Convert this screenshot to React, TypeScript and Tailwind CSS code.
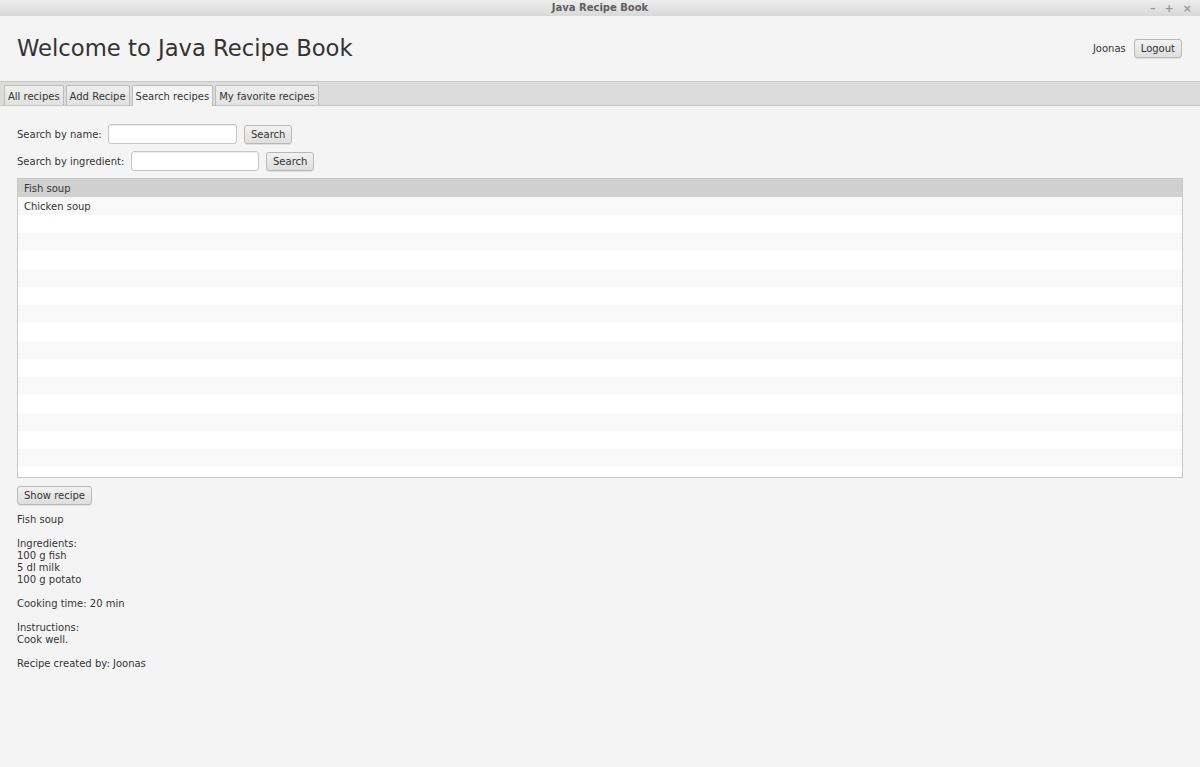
import React from "react";

const FONT = { fontFamily: '"DejaVu Sans", "Liberation Sans", sans-serif' };

const TABS = ["All recipes", "Add Recipe", "Search recipes", "My favorite recipes"];

function Btn({ label, className = "" }: { label: string; className?: string }) {
  return (
    <button
      className={`h-[19px] px-[6px] pt-[1px] whitespace-nowrap rounded-[3px] border border-[#b8b8b8] bg-gradient-to-b from-[#f2f2f2] to-[#dedede] text-[10px] leading-none text-[#333] shadow-[0_1px_0_#e0e0e0] ${className}`}
    >
      {label}
    </button>
  );
}

function Field({ width }: { width: string }) {
  return <div className={`${width} h-[20px] rounded-[3px] border border-[#c6c6c6] bg-white shadow-[inset_0_1px_1px_#eee]`} />;
}

export default function App() {
  const rows = Array.from({ length: 16 });
  return (
    <div className="w-[1200px] h-[767px] bg-[#f4f4f4] text-[#353535] flex flex-col overflow-hidden" style={FONT}>
      {/* window title bar */}
      <div className="h-[16px] shrink-0 relative bg-gradient-to-b from-[#ececec] to-[#d9d9d9] flex items-center justify-center">
        <span className="text-[10px] font-bold text-[#5d5d5d] leading-none">Java Recipe Book</span>
        <div className="absolute right-[8px] top-0 h-full flex items-center gap-[9px] text-[11px] text-[#9a9a9a] font-bold leading-none">
          <span>–</span>
          <span>+</span>
          <span>×</span>
        </div>
      </div>

      {/* header */}
      <div className="h-[66px] shrink-0 flex items-center justify-between pl-[17px] pr-[18px] border-b border-[#c9c9c9]">
        <h1 className="text-[22.7px] text-[#333] leading-none pb-[1px]">Welcome to Java Recipe Book</h1>
        <div className="flex items-center gap-[8px] pb-[1px]">
          <span className="text-[10px]">Joonas</span>
          <Btn label="Logout" />
        </div>
      </div>

      {/* tab header */}
      <div className="h-[24px] shrink-0 bg-[#dcdcdc] border-b border-[#c4c4c4] flex items-end gap-[2px] pl-[4px]">
        {TABS.map((t) => (
          <div
            key={t}
            className={`h-[20px] px-[3px] pt-[1px] whitespace-nowrap flex items-center border border-b-0 border-[#bcbcbc] rounded-t-[2px] text-[10px] ${
              t === "Search recipes" ? "bg-[#f4f4f4] h-[21px] -mb-[1px]" : "bg-gradient-to-b from-[#eeeeee] to-[#e2e2e2]"
            }`}
          >
            {t}
          </div>
        ))}
      </div>

      {/* content */}
      <div className="px-[17px] pt-[18px] flex flex-col text-[10px]">
        <div className="flex items-center h-[20px]">
          <span className="w-[91px] whitespace-nowrap">Search by name:</span>
          <Field width="w-[129px]" />
          <Btn label="Search" className="ml-[7px]" />
        </div>
        <div className="flex items-center h-[20px] mt-[7px]">
          <span className="w-[114px] whitespace-nowrap">Search by ingredient:</span>
          <Field width="w-[128px]" />
          <Btn label="Search" className="ml-[7px]" />
        </div>

        <div className="mt-[7px] h-[300px] border border-[#c8c8c8] bg-white flex flex-col overflow-hidden">
          {rows.map((_, i) => (
            <div
              key={i}
              className={`h-[18px] shrink-0 flex items-center px-[6px] ${
                i === 0 ? "bg-[#d0d0d0]" : i % 2 === 1 ? "bg-[#f9f9f9]" : "bg-white"
              }`}
            >
              {i === 0 ? "Fish soup" : i === 1 ? "Chicken soup" : ""}
            </div>
          ))}
        </div>

        <div className="mt-[8px]">
          <Btn label="Show recipe" />
        </div>

        <div className="mt-[9px] leading-[12px] whitespace-pre">
          {`Fish soup

Ingredients:
100 g fish
5 dl milk
100 g potato

Cooking time: 20 min

Instructions:
Cook well.

Recipe created by: Joonas`}
        </div>
      </div>
    </div>
  );
}
